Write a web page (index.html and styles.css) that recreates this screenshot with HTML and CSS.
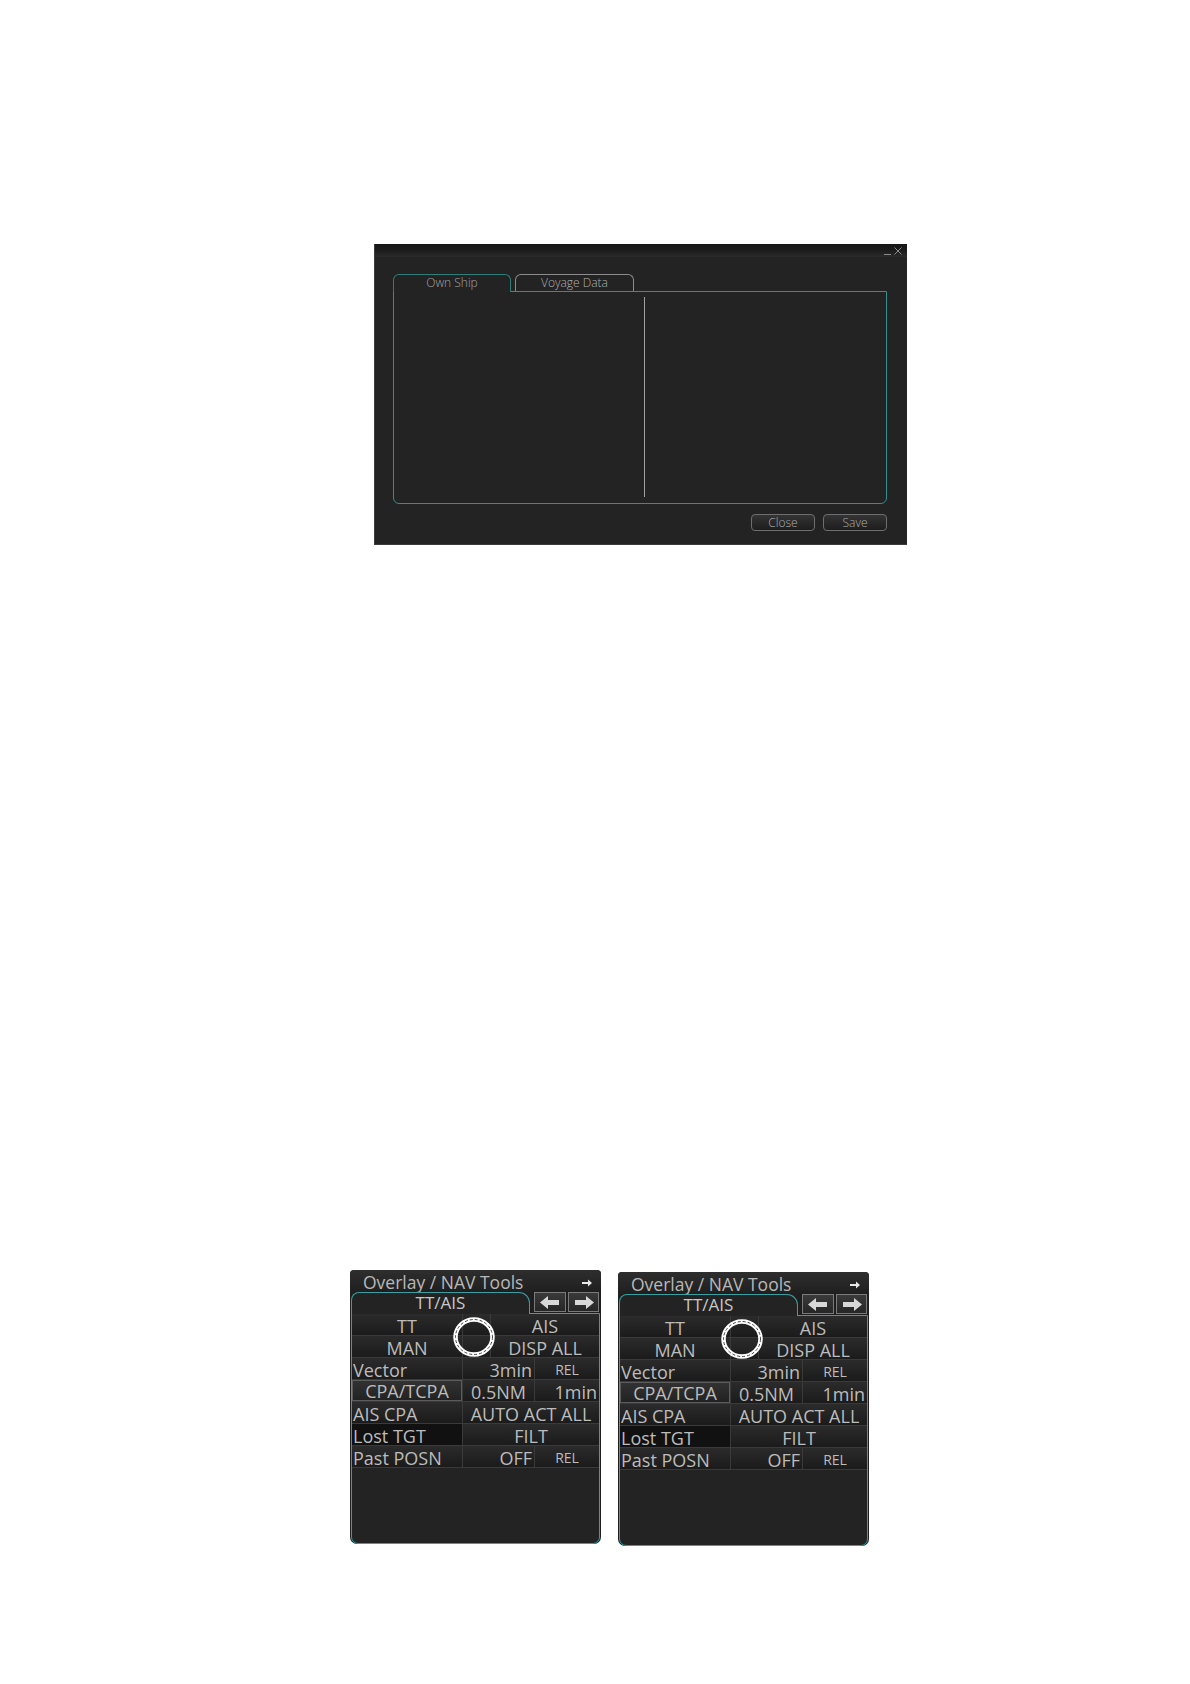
FILE: index.html
```html
<!DOCTYPE html>
<html>
<head>
<meta charset="utf-8">
<link rel="stylesheet" href="styles.css">
</head>
<body>
<div class="page">
  <div class="window">
    <div class="titlebar">
      <span class="ctl-min"></span>
      <svg class="ctl-x" width="8" height="8" viewBox="0 0 8 8"><path d="M0.5 0.5 L7.5 7.5 M7.5 0.5 L0.5 7.5" stroke="#8a8a8a" stroke-width="1" fill="none"/></svg>
    </div>
    <div class="win-body">
      <div class="tabs">
        <div class="tab active">Own Ship</div>
        <div class="tab">Voyage Data</div>
      </div>
      <div class="box">
        <div class="pane-left"></div>
        <div class="pane-right"></div>
      </div>
      <div class="buttons">
        <div class="btn">Close</div>
        <div class="btn">Save</div>
      </div>
    </div>
  </div>

  <div class="panels">
    <div class="panel">
      <div class="ptitle"><span>Overlay / NAV Tools</span>
        <svg class="mini-arrow" width="10" height="8" viewBox="0 0 10 8"><path d="M0 3 L6 3 L6 0.5 L10 4 L6 7.5 L6 5 L0 5 Z" fill="#e8e8e8"/></svg>
      </div>
      <div class="ptabs">
        <div class="ptab">TT/AIS</div>
        <div class="abtn abtn-l"><svg width="20" height="13" viewBox="0 0 20 13"><path d="M0 6.5 L8 0 L8 4 L19 4 L19 9 L8 9 L8 13 Z" fill="#d8d8d8"/></svg></div>
        <div class="abtn abtn-r"><svg width="20" height="13" viewBox="0 0 20 13"><path d="M20 6.5 L12 0 L12 4 L1 4 L1 9 L12 9 L12 13 Z" fill="#d8d8d8"/></svg></div>
      </div>
      <div class="pbox">
        <div class="row"><div class="cell wa c">TT</div><div class="cell wm"></div><div class="cell wr c">AIS</div></div>
        <div class="row"><div class="cell wa c">MAN</div><div class="cell wm"></div><div class="cell wr c">DISP ALL</div></div>
        <div class="row"><div class="cell wa l">Vector</div><div class="cell wb r">3min</div><div class="cell wc c sm">REL</div></div>
        <div class="row"><div class="cell wa c raised">CPA/TCPA</div><div class="cell wb c">0.5NM</div><div class="cell wc r">1min</div></div>
        <div class="row"><div class="cell wa l">AIS CPA</div><div class="cell wbc c">AUTO ACT ALL</div></div>
        <div class="row"><div class="cell wa l dark">Lost TGT</div><div class="cell wbc c">FILT</div></div>
        <div class="row"><div class="cell wa l">Past POSN</div><div class="cell wb r">OFF</div><div class="cell wc c sm">REL</div></div>
      </div>
      <svg class="ring" width="42" height="40" viewBox="0 0 42 40"><ellipse cx="21" cy="20" rx="18.5" ry="17.5" fill="none" stroke="#ffffff" stroke-width="4.5"/><ellipse cx="21" cy="20" rx="18.5" ry="17.5" fill="none" stroke="#444" stroke-width="1" stroke-dasharray="3 2"/></svg>
    </div>

    <div class="panel panel-2">
      <div class="ptitle"><span>Overlay / NAV Tools</span>
        <svg class="mini-arrow" width="10" height="8" viewBox="0 0 10 8"><path d="M0 3 L6 3 L6 0.5 L10 4 L6 7.5 L6 5 L0 5 Z" fill="#e8e8e8"/></svg>
      </div>
      <div class="ptabs">
        <div class="ptab">TT/AIS</div>
        <div class="abtn abtn-l"><svg width="20" height="13" viewBox="0 0 20 13"><path d="M0 6.5 L8 0 L8 4 L19 4 L19 9 L8 9 L8 13 Z" fill="#d8d8d8"/></svg></div>
        <div class="abtn abtn-r"><svg width="20" height="13" viewBox="0 0 20 13"><path d="M20 6.5 L12 0 L12 4 L1 4 L1 9 L12 9 L12 13 Z" fill="#d8d8d8"/></svg></div>
      </div>
      <div class="pbox">
        <div class="row"><div class="cell wa c">TT</div><div class="cell wm"></div><div class="cell wr c">AIS</div></div>
        <div class="row"><div class="cell wa c">MAN</div><div class="cell wm"></div><div class="cell wr c">DISP ALL</div></div>
        <div class="row"><div class="cell wa l">Vector</div><div class="cell wb r">3min</div><div class="cell wc c sm">REL</div></div>
        <div class="row"><div class="cell wa c raised">CPA/TCPA</div><div class="cell wb c">0.5NM</div><div class="cell wc r">1min</div></div>
        <div class="row"><div class="cell wa l">AIS CPA</div><div class="cell wbc c">AUTO ACT ALL</div></div>
        <div class="row"><div class="cell wa l dark">Lost TGT</div><div class="cell wbc c">FILT</div></div>
        <div class="row"><div class="cell wa l">Past POSN</div><div class="cell wb r">OFF</div><div class="cell wc c sm">REL</div></div>
      </div>
      <svg class="ring" width="42" height="40" viewBox="0 0 42 40"><ellipse cx="21" cy="20" rx="18.5" ry="17.5" fill="none" stroke="#ffffff" stroke-width="4.5"/><ellipse cx="21" cy="20" rx="18.5" ry="17.5" fill="none" stroke="#444" stroke-width="1" stroke-dasharray="3 2"/></svg>
    </div>
  </div>
</div>
</body>
</html>
```

FILE: styles.css
```css
* { box-sizing: border-box; }
html, body { margin: 0; padding: 0; background: #ffffff; }
body { font-family: "Open Sans", "Noto Sans", sans-serif; }

.page { padding-top: 244px; }

/* ---------- dialog window ---------- */
.window {
  margin-left: 374px;
  width: 533px;
  height: 301px;
  background: #232323;
  border-left: 1px solid #3c3c3c;
  border-bottom: 1px solid #3c3c3c;
}
.titlebar {
  height: 13px;
  background: linear-gradient(#161616, #1c1c1c 50%, #2b2b2b);
  display: flex;
  justify-content: flex-end;
  align-items: center;
  gap: 3px;
  padding-right: 5px;
}
.ctl-min {
  width: 7px;
  height: 1px;
  background: #8a8a8a;
  margin-top: 8px;
}
.ctl-x { display: block; margin-top: 1px; }

.win-body { padding: 17px 20px 0 18px; }

.tabs {
  display: flex;
  align-items: flex-start;
  gap: 4px;
  height: 18px;
  margin-bottom: -1px;
  position: relative;
  z-index: 1;
}
.tab {
  width: 119px;
  height: 17px;
  border: 1px solid #8c8c8c;
  border-bottom: none;
  border-radius: 6px 6px 0 0;
  color: #b0b0b0;
  font-size: 12px;
  font-weight: 300;
  line-height: 16px;
  text-align: center;
  background: #232323;
}
.tab.active {
  width: 118px;
  height: 18px;
  border-color: #2b7f78;
  color: #a4a4a4;
}

.box {
  height: 213px;
  border: 1px solid #2f8f8d;
  border-radius: 0 0 6px 6px;
  padding: 5px 0 6px 0;
  display: flex;
}
.pane-left {
  width: 251px;
  border-right: 1px solid #a0a0a0;
}
.pane-right { flex: 1; }

.buttons {
  display: flex;
  justify-content: flex-end;
  gap: 8px;
  margin-top: 10px;
}
.btn {
  width: 64px;
  height: 17px;
  border: 1px solid #6e6e6e;
  border-radius: 4px;
  background: linear-gradient(#343434, #1d1d1d);
  color: #acacac;
  font-size: 12px;
  font-weight: 300;
  line-height: 15px;
  text-align: center;
}

/* ---------- overlay panels ---------- */
.panels {
  display: flex;
  align-items: flex-start;
  gap: 17px;
  margin-top: 725px;
  margin-left: 350px;
}
.panel {
  position: relative;
  width: 251px;
  height: 274px;
  background: #1e1e1e;
  border-radius: 4px 4px 7px 7px;
}
.panel-2 { margin-top: 2px; }

.ptitle {
  height: 22px;
  padding: 0 9px 0 13px;
  display: flex;
  justify-content: space-between;
  align-items: center;
  background: linear-gradient(#2e2e2e, #1f1f1f);
  border-radius: 4px 4px 0 0;
  color: #b8b8b8;
  font-size: 17.5px;
  line-height: 19px;
  white-space: nowrap;
}
.ptitle span { margin-top: 2px; }
.mini-arrow { display: block; margin-top: 3px; }

.ptabs {
  display: flex;
  align-items: flex-start;
  height: 22px;
  margin-bottom: -1px;
  padding-left: 1px;
  position: relative;
  z-index: 1;
}
.ptab {
  width: 179px;
  height: 22px;
  border: 1px solid #3a9ea2;
  border-bottom: none;
  border-radius: 8px 11px 0 0;
  background: #232323;
  color: #c8c8c8;
  font-size: 17px;
  line-height: 19px;
  text-align: center;
}
.abtn {
  height: 20px;
  border: 1px solid #7a7a7a;
  background: linear-gradient(#3a3a3a, #262626);
  display: flex;
  align-items: center;
  justify-content: center;
}
.abtn-l { width: 32px; margin-left: 4px; }
.abtn-r { width: 31px; margin-left: 2px; }
.abtn svg { display: block; }

.pbox {
  margin: 0 1px;
  height: 231px;
  border: 1px solid #3a9ea2;
  border-radius: 0 0 7px 7px;
  background: #232323;
}

.row {
  display: flex;
  gap: 1px;
  height: 22px;
  background: #3a3a3a;
  border-bottom: 1px solid #3a3a3a;
}
.cell {
  height: 21px;
  padding-top: 2px;
  background: linear-gradient(#2b2b2b, #1b1b1b);
  color: #bcbcbc;
  font-size: 18px;
  line-height: 20px;
  white-space: nowrap;
}
.wa { width: 110px; }
.wb { width: 71px; }
.wc { width: 64px; }
.wm { width: 27px; }
.wr { width: 108px; }
.wbc { width: 136px; }
.l { text-align: left; padding-left: 1px; }
.c { text-align: center; }
.r { text-align: right; padding-right: 2px; }
.sm { font-size: 14px; }
.dark { background: #111111; }
.raised {
  border: 1px solid #5c5c5c;
  background: linear-gradient(#323232, #222222);
  padding-top: 1px;
  line-height: 19px;
}

.ring {
  position: absolute;
  left: 103px;
  top: 47px;
}
```
